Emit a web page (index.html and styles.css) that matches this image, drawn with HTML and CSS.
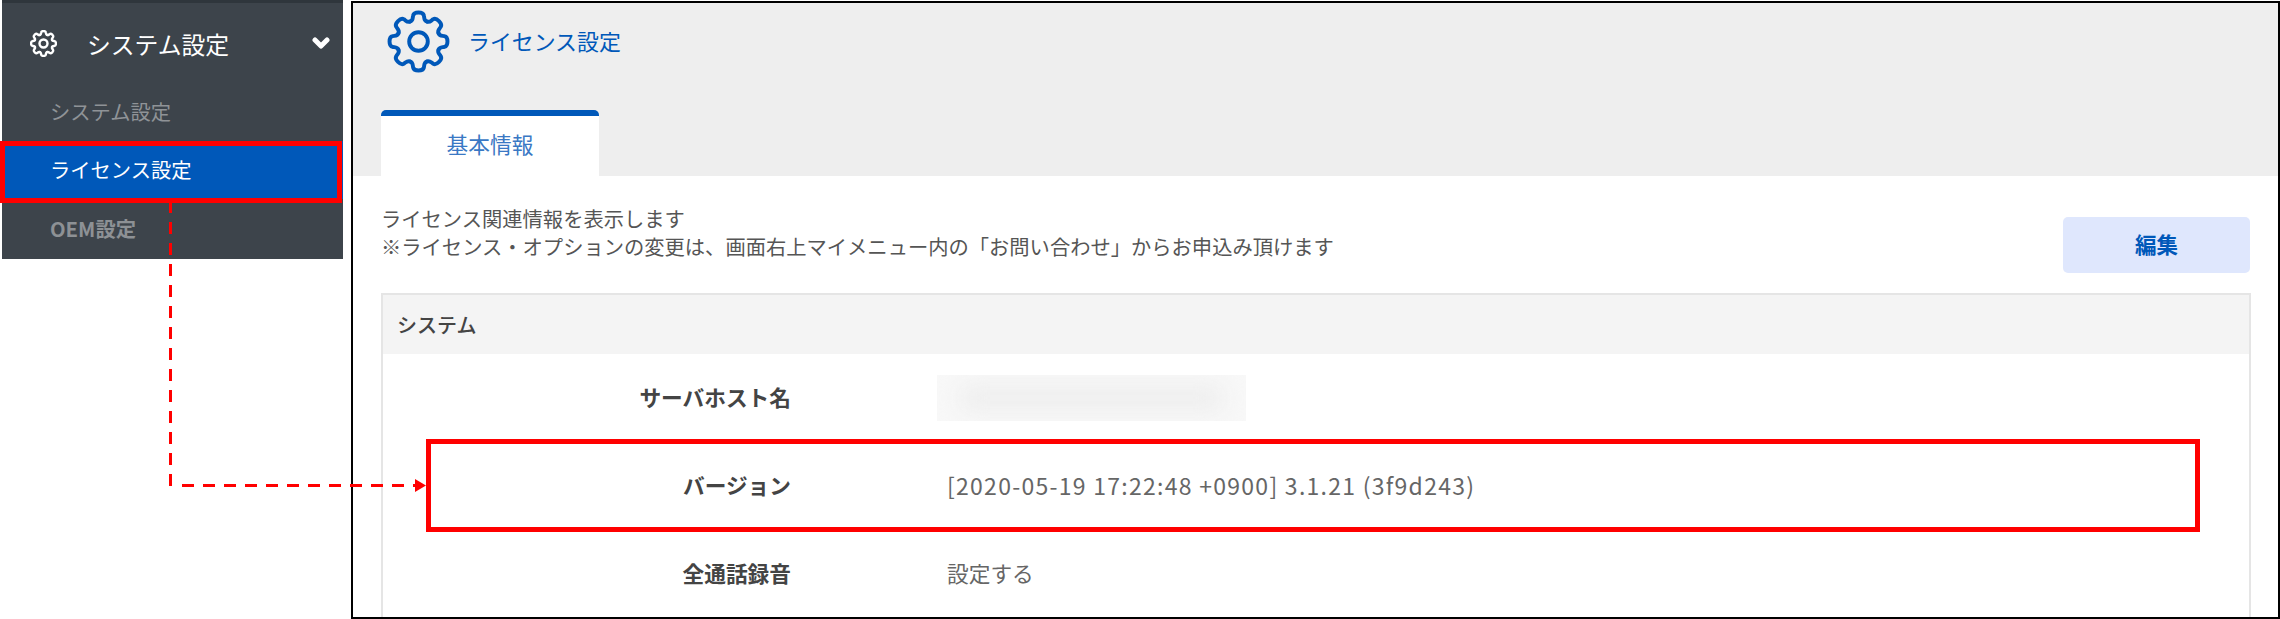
FILE: index.html
```html
<!DOCTYPE html>
<html lang="ja">
<head>
    <meta charset="UTF-8">
    <title>ライセンス設定</title>
    <link rel="stylesheet" href="styles.css">
</head>
<body>
    <svg class="defs" width="0" height="0">
        <defs>
            <path id="tooth" d="M-8 -19.4C-5 -20.5 -5.8 -23 -5.2 -25.2C-4.4 -29 4.4 -29 5.2 -25.2C5.8 -23 5 -20.5 8 -19.4"/>
            <g id="cog" fill="none" stroke="currentColor" stroke-linecap="round" stroke-linejoin="round">
                <use href="#tooth"/>
                <use href="#tooth" transform="rotate(45)"/>
                <use href="#tooth" transform="rotate(90)"/>
                <use href="#tooth" transform="rotate(135)"/>
                <use href="#tooth" transform="rotate(180)"/>
                <use href="#tooth" transform="rotate(225)"/>
                <use href="#tooth" transform="rotate(270)"/>
                <use href="#tooth" transform="rotate(315)"/>
                <circle r="9"/>
            </g>
        </defs>
    </svg>

    <nav class="sidebar">
        <div class="side-head">
            <svg class="side-cog" viewBox="-30.5 -30.5 61 61"><use href="#cog"/></svg>
            <span class="side-title">システム設定</span>
            <svg class="side-chevron" viewBox="0 0 18 12"><path d="M3 3L9 9L15 3" fill="none" stroke="currentColor" stroke-width="5" stroke-linecap="round" stroke-linejoin="round"/></svg>
        </div>
        <a class="side-item">システム設定</a>
        <a class="side-item active">ライセンス設定</a>
        <a class="side-item oem">OEM設定</a>
    </nav>

    <main class="frame">
        <header class="page-head">
            <div class="page-title">
                <svg class="title-cog" viewBox="-30.5 -30.5 61 61"><use href="#cog"/></svg>
                <span class="title-text">ライセンス設定</span>
            </div>
            <div class="tab">基本情報</div>
        </header>

        <section class="intro">
            <p class="intro-text">ライセンス関連情報を表示します<br>※ライセンス・オプションの変更は、画面右上マイメニュー内の「お問い合わせ」からお申込み頂けます</p>
            <button class="edit-btn">編集</button>
        </section>

        <section class="panel">
            <h3 class="panel-head">システム</h3>
            <div class="info-row">
                <div class="info-label">サーバホスト名</div>
                <div class="blurred"><div class="blurred-inner"></div></div>
            </div>
            <div class="info-row">
                <div class="info-label">バージョン</div>
                <div class="info-value version">[2020-05-19 17:22:48 +0900] 3.1.21 (3f9d243)</div>
            </div>
            <div class="info-row">
                <div class="info-label">全通話録音</div>
                <div class="info-value">設定する</div>
            </div>
        </section>
    </main>

    <!-- red callouts drawn over the screenshot -->
    <div class="callout callout-menu"></div>
    <div class="callout callout-version"></div>
    <svg class="connector" viewBox="0 0 2280 619">
        <path class="dash" d="M170.5 201V486"/>
        <path class="dash" d="M182 485.5H416"/>
        <path class="arrow" d="M415 479L426 485.5L415 492Z"/>
    </svg>
</body>
</html>
```

FILE: styles.css
```css
*{
    box-sizing: border-box;
}
html, body{
    height: 619px;
    overflow: hidden;
}
body{
    margin: 0;
    display: flex;
    align-items: flex-start;
    position: relative;
    background: #fff;
    font-family: "Noto Sans CJK JP", "Noto Sans", sans-serif;
    color: #555;
}
.defs{
    position: absolute;
}

/* sidebar */
.sidebar{
    width: 341px;
    height: 259px;
    margin-left: 2px;
    flex-shrink: 0;
    background: #3d444b;
    border-top: 3px solid #2f363c;
}
.side-head{
    height: 80px;
    padding: 0 13px 0 28px;
    display: flex;
    align-items: center;
    color: #fff;
}
.side-cog{
    width: 27px;
    height: 27px;
    stroke-width: 5.5;
}
.side-title{
    margin-left: 30px;
    font-size: 23.8px;
    flex: 1;
}
.side-chevron{
    width: 18px;
    height: 12px;
}
.side-item{
    display: flex;
    align-items: center;
    height: 58px;
    padding: 0 0 2px 48px;
    font-size: 20.3px;
    color: #8f9397;
}
.side-item.active{
    background: #0058b9;
    color: #fff;
}
.side-item.oem{
    font-weight: 700;
    height: 60px;
    color: #8d9195;
}

/* main frame */
.frame{
    width: 1929px;
    height: 618px;
    margin: 1px 0 0 8px;
    border: 2px solid #000;
    overflow: hidden;
    flex-shrink: 0;
}
.page-head{
    height: 173px;
    padding-top: 7px;
    background: #eee;
}
.page-title{
    height: 63px;
    padding-left: 34px;
    display: flex;
    align-items: center;
    gap: 18px;
    font-size: 21.9px;
    color: #0058b9;
}
.title-text{
    margin-bottom: 3px;
}
.title-cog{
    width: 63px;
    height: 63px;
    stroke-width: 3.8;
}
.tab{
    width: 218px;
    height: 66px;
    margin: 37px 0 0 28px;
    padding-bottom: 5px;
    background: #fff;
    border-top: 6px solid #0058b9;
    border-radius: 5px 5px 0 0;
    display: flex;
    align-items: center;
    justify-content: center;
    font-size: 21.7px;
    color: #3a78c4;
}

.intro{
    height: 117px;
    padding: 28px 28px 0 28px;
    display: flex;
    justify-content: space-between;
    align-items: flex-start;
}
.intro-text{
    margin: 0;
    font-size: 20.3px;
    line-height: 28px;
    color: #555;
}
.edit-btn{
    width: 187px;
    height: 56px;
    margin-top: 13px;
    padding-bottom: 4px;
    border: none;
    border-radius: 5px;
    background: #dfe7fd;
    color: #0058b9;
    font: 700 21.5px "Noto Sans CJK JP", sans-serif;
}

/* system panel */
.panel{
    width: 1870px;
    margin-left: 28px;
    border: 2px solid #e5e5e5;
}
.panel-head{
    height: 59px;
    margin: 0;
    padding-left: 14px;
    display: flex;
    align-items: center;
    background: #f4f4f4;
    font-size: 20px;
    font-weight: 500;
    color: #444;
}
.info-row{
    display: grid;
    grid-template-columns: 408px 1fr;
    column-gap: 156px;
    align-items: center;
    height: 88px;
    padding-bottom: 3px;
}
.info-label{
    text-align: right;
    font-size: 21.7px;
    font-weight: 700;
    color: #444;
}
.info-value{
    font-size: 21.7px;
    color: #666;
}
.version{
    font-size: 23px;
    letter-spacing: 1.27px;
}
.blurred{
    width: 309px;
    height: 46px;
    margin: 3px 0 0 -10px;
    background: #f8f8f8;
    overflow: hidden;
}
.blurred-inner{
    height: 22px;
    margin: 12px 24px;
    background: #ececec;
    filter: blur(12px);
}

/* overlays */
.callout{
    position: absolute;
    border: 5px solid #f00;
}
.callout-menu{
    left: 0;
    top: 141px;
    width: 342px;
    height: 62px;
}
.callout-version{
    left: 426px;
    top: 439px;
    width: 1774px;
    height: 93px;
}
.connector{
    position: absolute;
    left: 0;
    top: 0;
    width: 2280px;
    height: 619px;
}
.dash{
    fill: none;
    stroke: #f00;
    stroke-width: 3;
    stroke-dasharray: 12 9;
}
.arrow{
    fill: #f00;
}
```
